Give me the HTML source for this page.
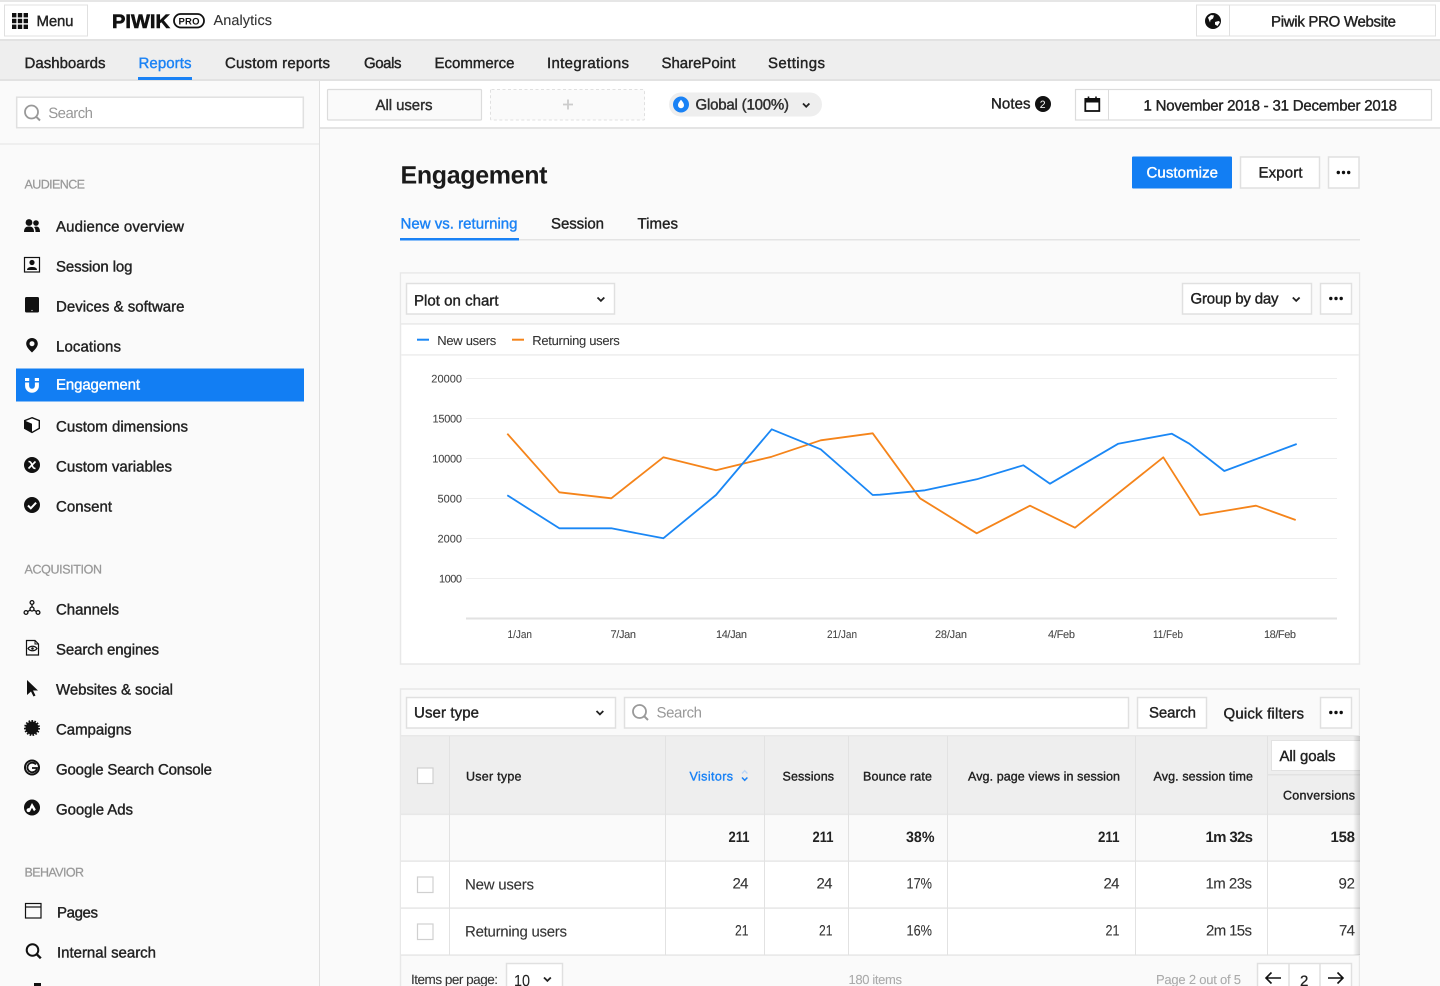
<!DOCTYPE html>
<html lang="en"><head><meta charset="utf-8"><title>Engagement - Piwik PRO Analytics</title>
<style>
html,body{margin:0;padding:0;width:1440px;height:986px;overflow:hidden;background:#fafafa}
svg{display:block}
text{font-family:"Liberation Sans",sans-serif;fill:#222;white-space:pre;text-rendering:geometricPrecision}
.m{font-size:15px;stroke:#222;stroke-width:.4}
.s{font-size:12.5px;fill:#999;stroke:#999;stroke-width:.25}
.ph{font-size:15px;fill:#999}
.r{font-size:15px;fill:#333;stroke:#333;stroke-width:.1}
.h{font-size:12.5px;stroke:#222;stroke-width:.38}
.c{font-size:11px;fill:#444;stroke:#444;stroke-width:.06}
.l{font-size:13px;fill:#333;stroke:#333;stroke-width:.08}
.n{font-size:15px;font-weight:700;fill:#222}
.w{fill:#fff;stroke:#fff}
.b{fill:#1a82f5;stroke:#1a82f5}
.box{fill:#fff;stroke:#e0e0e0;stroke-width:1.5}
.g{stroke:#eee;stroke-width:1}
.v{stroke:#e2e2e2;stroke-width:1}
.ch{fill:none;stroke:#222;stroke-width:1.8}
</style></head><body>
<svg width="1440" height="986" viewBox="0 0 1440 986" xmlns="http://www.w3.org/2000/svg">
<defs><linearGradient id="sh" x1="0" x2="1" y1="0" y2="0"><stop offset="0" stop-color="#000" stop-opacity="0"/><stop offset="1" stop-color="#000" stop-opacity=".16"/></linearGradient></defs>
<rect width="1440" height="986" fill="#fafafa"/>

<!-- top bar -->
<rect width="1440" height="2" fill="#e6e6e6"/>
<rect y="2" width="1440" height="37" fill="#fff"/>
<rect y="39" width="1440" height="2" fill="#e2e2e2"/>
<rect x="4.5" y="5" width="83" height="31" fill="#fff" stroke="#e0e0e0"/>
<g fill="#111">
<rect x="12" y="13" width="4.4" height="4.4"/><rect x="17.8" y="13" width="4.4" height="4.4"/><rect x="23.6" y="13" width="4.4" height="4.4"/>
<rect x="12" y="18.8" width="4.4" height="4.4"/><rect x="17.8" y="18.8" width="4.4" height="4.4"/><rect x="23.6" y="18.8" width="4.4" height="4.4"/>
<rect x="12" y="24.6" width="4.4" height="4.4"/><rect x="17.8" y="24.6" width="4.4" height="4.4"/><rect x="23.6" y="24.6" width="4.4" height="4.4"/>
</g>
<text class="m" x="36.5" y="26" textLength="37">Menu</text>
<text x="112" y="28" font-size="19.5" font-weight="700" textLength="58" lengthAdjust="spacingAndGlyphs" style="fill:#111;stroke:#111;stroke-width:.6">PIWIK</text>
<rect x="174" y="14" width="30" height="13.5" rx="6.7" fill="none" stroke="#111" stroke-width="1.8"/>
<text x="178.5" y="24.3" font-size="9.5" font-weight="700" textLength="21" style="fill:#111">PRO</text>
<text x="213.5" y="25" font-size="14.5" textLength="58.5" style="fill:#333;stroke:#333;stroke-width:.1">Analytics</text>
<rect x="1196.5" y="5" width="239" height="31" fill="#fff" stroke="#e0e0e0"/>
<line x1="1229.5" y1="5" x2="1229.5" y2="36" stroke="#e0e0e0"/>
<circle cx="1213" cy="21" r="8" fill="#111"/>
<path d="M1208 17.5l3-2.5 3 .5-1 3-2.5 1.5-.5 2.5zM1215 22l3.5-1 1.5 1-2.5 4-2.500-1.500z" fill="#fff"/>
<text class="m" x="1271" y="26.5" textLength="125">Piwik PRO Website</text>

<!-- nav -->
<rect y="41" width="1440" height="38" fill="#eeeeee"/>
<rect y="79" width="1440" height="2" fill="#e2e2e2"/>
<text class="m" x="24.5" y="68" textLength="81">Dashboards</text>
<text class="m b" x="138.5" y="68" textLength="53">Reports</text>
<text class="m" x="225" y="68" textLength="105">Custom reports</text>
<text class="m" x="364" y="68" textLength="37.5">Goals</text>
<text class="m" x="434.5" y="68" textLength="80">Ecommerce</text>
<text class="m" x="547" y="68" textLength="82">Integrations</text>
<text class="m" x="661.5" y="68" textLength="74">SharePoint</text>
<text class="m" x="768" y="68" textLength="57">Settings</text>
<rect x="138" y="77" width="54" height="3" fill="#1a82f5"/>

<!-- sidebar -->
<rect x="319" y="81" width="1" height="905" fill="#e0e0e0"/>
<rect y="143.500" width="319" height="1" fill="#e4e4e4"/>
<rect x="16.7" y="97.2" width="286.6" height="30.500" class="box"/>
<circle cx="31.5" cy="112" r="6.5" fill="none" stroke="#999" stroke-width="1.8"/><line x1="36.3" y1="116.8" x2="40" y2="120.5" stroke="#999" stroke-width="2"/>
<text class="ph" x="48.2" y="118" textLength="44.8">Search</text>
<text class="s" x="24.5" y="188.600" textLength="60.5">AUDIENCE</text>

<rect x="16" y="368.5" width="288" height="33" fill="#127ef3"/>
<text class="m" x="56" y="231.500" textLength="128">Audience overview</text>
<text class="m" x="56" y="271.500" textLength="76.5">Session log</text>
<text class="m" x="56" y="311.500" textLength="128.5">Devices &amp; software</text>
<text class="m" x="56" y="351.500" textLength="65">Locations</text>
<text class="m w" x="56" y="389.5" textLength="84">Engagement</text>
<text class="m" x="56" y="431.500" textLength="132">Custom dimensions</text>
<text class="m" x="56" y="471.500" textLength="116">Custom variables</text>
<text class="m" x="56" y="511.500" textLength="56">Consent</text>

<text class="s" x="24.5" y="573.600" textLength="77.5">ACQUISITION</text>
<text class="m" x="56" y="614.500" textLength="63">Channels</text>
<text class="m" x="56" y="654.500" textLength="103">Search engines</text>
<text class="m" x="56" y="694.500" textLength="117">Websites &amp; social</text>
<text class="m" x="56" y="734.500" textLength="75.5">Campaigns</text>
<text class="m" x="56" y="774.500" textLength="156">Google Search Console</text>
<text class="m" x="56" y="814.500" textLength="77">Google Ads</text>
<text class="s" x="24.5" y="876.600" textLength="59.5">BEHAVIOR</text>
<text class="m" x="57" y="917.500" textLength="41">Pages</text>
<text class="m" x="57" y="957.500" textLength="99">Internal search</text>

<!-- sidebar icons -->
<g fill="#111">
<circle cx="29" cy="222.500" r="3.400"/><path d="M24 232c0-4 1.800-5.500 5-5.500s5 1.500 5 5.500z"/>
<circle cx="36" cy="223" r="2.800"/><path d="M36 226.500c2.500 0 4 1.500 4 5.500h-4.500c0-2.500-.5-4-1.500-5z"/>
<rect x="24.500" y="257.500" width="15" height="14.500" fill="none" stroke="#111" stroke-width="1.200"/>
<circle cx="32" cy="262.500" r="2.600"/><path d="M27 270c0-2.500 2.500-3 5-3s5 .5 5 3z"/>
<rect x="25" y="297" width="14" height="15.500" rx="1.500"/><circle cx="32" cy="310.500" r=".6" fill="#fff"/>
<path fill-rule="evenodd" d="M32 338c3.400 0 5.800 2.500 5.800 5.700 0 3.200-3.500 6.500-5.800 8.800-2.300-2.300-5.800-5.600-5.800-8.800 0-3.200 2.400-5.700 5.800-5.700zm0 3.200a2.500 2.500 0 1 0 0 5 2.500 2.500 0 0 0 0-5z"/>
<path d="M32 417.700l7.300 2.900v7.700l-7.300 4.200-7.300-4.200v-7.700z" fill="#fff" stroke="#111" stroke-width="1.400"/>
<path d="M24.500 420.500l7.500 3.300v9l-7.500-4.200z"/>
<circle cx="32" cy="465" r="8"/><circle cx="32" cy="505" r="8"/>
<path d="M27 680v15l4-3.500 2.500 5 2-1-2.500-5h5z"/>
<circle cx="32" cy="728" r="6.500"/>
<circle cx="32" cy="728" r="7" fill="none" stroke="#111" stroke-width="2" stroke-dasharray="1.600 1.330"/>
<circle cx="32" cy="807.500" r="8"/>
<rect x="34" y="983" width="7" height="3"/>
</g>
<path d="M28.500 468.500l7-7M28.500 461.500c2 0 2.500 1 3.500 3.500s1.500 3.500 3.500 3.500" fill="none" stroke="#fff" stroke-width="1.600"/>
<path d="M28 505.500l2.800 2.800 5.300-5.600" fill="none" stroke="#fff" stroke-width="2"/>
<path d="M25 378h4.200v3H25zM34.800 378H39v3h-4.200z" fill="#fff"/>
<path d="M27.100 382.500v3.400a4.900 4.900 0 0 0 9.800 0v-3.400" fill="none" stroke="#fff" stroke-width="4"/>
<g fill="none" stroke="#111" stroke-width="1.300">
<circle cx="32" cy="602.500" r="1.900"/><circle cx="26" cy="612.500" r="1.900"/><circle cx="38" cy="612.500" r="1.900"/><circle cx="32" cy="609" r="2"/>
<path d="M32 604.500v2.500M30.200 610l-2.500 1.600M33.800 610l2.500 1.600"/>
<path d="M26.500 640.500h8.500l3.500 3.500v11h-12z" stroke-width="1.200"/><path d="M35 640.500v3.500h3.500" stroke-width="1"/>
<path d="M28 648.500c2.200-3 6.800-3 9 0-2.200 3-6.800 3-9 0z" stroke-width="1.200"/>
<circle cx="32" cy="767.500" r="7" stroke-width="2"/>
<path d="M36 764.500a4.800 4.800 0 1 0 1 3.500h-5" stroke-width="1.800"/>
<rect x="25.500" y="903.500" width="15.500" height="14.500" stroke-width="1.200"/><path d="M25.500 907h15.500" stroke-width="1.200"/>
<circle cx="32.500" cy="950" r="5.800" stroke-width="2"/><path d="M36.800 954.300l4 4" stroke-width="2.400"/>
</g>
<circle cx="32.500" cy="648.500" r="1.300" fill="#111"/>
<path d="M32 803l3.800 6.500-1.800 1.800-2-3.500-1.500 2.800a2 2 0 1 1-1.200-2.300z" fill="#fff"/>

<!-- filter bar -->
<rect x="320" y="81" width="1120" height="46" fill="#fff"/>
<rect x="320" y="127" width="1120" height="2" fill="#e4e4e4"/>
<rect x="327.500" y="89.500" width="154" height="30.500" rx="1" fill="#fafafa" stroke="#dcdcdc" stroke-width="1.200"/>
<text class="m" x="375.500" y="110" textLength="57" style="fill:#333">All users</text>
<rect x="490.500" y="89.500" width="154" height="30.500" rx="1" fill="#fafafa" stroke="#e0e0e0" stroke-dasharray="3 2.500"/>
<path d="M568 99.500v10M563 104.500h10" stroke="#ccc" stroke-width="1.800"/>
<rect x="669" y="92.500" width="153" height="24" rx="12" fill="#eee"/>
<circle cx="681" cy="104.500" r="8" fill="#1a82f5"/>
<path d="M681 99.800c1.500 1.800 3 3.500 3 5.400a3 3 0 0 1-6 0c0-1.900 1.500-3.600 3-5.400z" fill="#fff"/>
<text class="m" x="695.500" y="109.500" textLength="93.500" style="fill:#333">Global (100%)</text>
<path class="ch" d="M803 103.500l3.200 3.200 3.200-3.200"/>
<text class="m" x="991" y="108.500" textLength="39.500">Notes</text>
<circle cx="1043" cy="104" r="8" fill="#111"/>
<text x="1039.800" y="107.800" font-size="10.500" textLength="6.500" style="fill:#fff">2</text>
<rect x="1075.500" y="89.500" width="356" height="30.500" fill="#fff" stroke="#dcdcdc" stroke-width="1.200"/>
<line x1="1108.500" y1="89.500" x2="1108.500" y2="120" stroke="#dcdcdc"/>
<rect x="1085.300" y="99" width="14" height="12" fill="none" stroke="#111" stroke-width="1.800"/>
<rect x="1085" y="98" width="15" height="4.500" fill="#111"/>
<path d="M1088.500 96.500v2.500M1096 96.500v2.500" stroke="#111" stroke-width="1.600"/>
<text class="m" x="1143.500" y="110.500" textLength="253.500">1 November 2018 - 31 December 2018</text>

<!-- heading -->
<text x="400.500" y="183.500" font-size="25" font-weight="700" textLength="147" style="fill:#1a1a1a">Engagement</text>
<rect x="1132" y="156.500" width="100" height="32" rx="1" fill="#127ef3"/>
<text class="m w" x="1146.500" y="177.500" textLength="71.500">Customize</text>
<rect x="1240.500" y="157" width="79" height="31" class="box"/>
<text class="m" x="1258.500" y="177.500" textLength="44">Export</text>
<rect x="1328.500" y="157" width="30.500" height="31" class="box"/>
<g fill="#111"><circle cx="1338.300" cy="172.500" r="1.700"/><circle cx="1343.500" cy="172.500" r="1.700"/><circle cx="1348.700" cy="172.500" r="1.700"/></g>
<rect x="400" y="239" width="960" height="1.500" fill="#e4e4e4"/>
<rect x="400" y="238" width="119" height="2.500" fill="#1a82f5"/>
<text class="m b" x="400.500" y="228.700" textLength="117">New vs. returning</text>
<text class="m" x="551" y="228.700" textLength="53">Session</text>
<text class="m" x="637.500" y="228.700" textLength="40.500">Times</text>

<!-- chart panel -->
<rect x="400.500" y="273" width="959" height="391" fill="#fff" stroke="#e8e8e8" stroke-width="1.500"/>
<rect x="401.200" y="273.800" width="957.600" height="49.500" fill="#fafafa"/>
<rect x="401" y="323" width="958" height="1.800" fill="#ececec"/>
<rect x="401" y="354" width="958" height="1.800" fill="#f0f0f0"/>
<rect x="406.500" y="283.500" width="208" height="30.500" class="box"/>
<text class="m" x="414" y="305.300" textLength="84.500">Plot on chart</text>
<path class="ch" d="M597.500 297.500l3.400 3.400 3.400-3.400"/>
<rect x="1182.500" y="283.500" width="129" height="30.500" class="box"/>
<text class="m" x="1190.500" y="303.500" textLength="88">Group by day</text>
<path class="ch" d="M1292.800 297.500l3.400 3.400 3.400-3.400"/>
<rect x="1320.500" y="283.500" width="31" height="30.500" class="box"/>
<g fill="#111"><circle cx="1330.800" cy="298.500" r="1.700"/><circle cx="1336" cy="298.500" r="1.700"/><circle cx="1341.200" cy="298.500" r="1.700"/></g>
<rect x="417" y="338.700" width="12" height="2" fill="#1a87f5"/>
<text class="l" x="437.300" y="345" textLength="59">New users</text>
<rect x="512" y="338.700" width="12" height="2" fill="#f5841a"/>
<text class="l" x="532.300" y="345" textLength="87.500">Returning users</text>
<g>
<line class="g" x1="466" y1="378.500" x2="1337" y2="378.500"/>
<line class="g" x1="466" y1="418.500" x2="1337" y2="418.500"/>
<line class="g" x1="466" y1="458.500" x2="1337" y2="458.500"/>
<line class="g" x1="466" y1="498.500" x2="1337" y2="498.500"/>
<line class="g" x1="466" y1="538.500" x2="1337" y2="538.500"/>
<line class="g" x1="466" y1="578.500" x2="1337" y2="578.500"/>
</g>
<rect x="466" y="617.500" width="871" height="2" fill="#e2e2e2"/>
<text class="c" x="431.300" y="382.500" textLength="30.700">20000</text>
<text class="c" x="432.500" y="422.500" textLength="29.500">15000</text>
<text class="c" x="432.300" y="462.500" textLength="29.700">10000</text>
<text class="c" x="437.500" y="502.500" textLength="24.500">5000</text>
<text class="c" x="437.500" y="542.500" textLength="24.500">2000</text>
<text class="c" x="439" y="582.500" textLength="23">1000</text>
<text class="c" x="507.500" y="638" textLength="24.500" lengthAdjust="spacingAndGlyphs">1/Jan</text>
<text class="c" x="610.500" y="638" textLength="25.500">7/Jan</text>
<text class="c" x="716" y="638" textLength="31">14/Jan</text>
<text class="c" x="827" y="638" textLength="30" lengthAdjust="spacingAndGlyphs">21/Jan</text>
<text class="c" x="935" y="638" textLength="32">28/Jan</text>
<text class="c" x="1048" y="638" textLength="27">4/Feb</text>
<text class="c" x="1153" y="638" textLength="30" lengthAdjust="spacingAndGlyphs">11/Feb</text>
<text class="c" x="1264" y="638" textLength="32">18/Feb</text>
<polyline fill="none" stroke="#f5841a" stroke-width="1.800" stroke-linejoin="round" points="507.300,433.700 559.300,492.300 611.300,498.300 663.300,457.300 716,470.300 771.700,456.700 820.700,440.300 872.700,433.300 920,498.300 976.700,533.300 1030,505.700 1075,527.700 1163.300,457.300 1200,515 1256,505.700 1295.700,520"/>
<polyline fill="none" stroke="#1a87f5" stroke-width="1.800" stroke-linejoin="round" points="507.300,495.300 559.300,528.300 611.300,528.300 663.300,538.300 716,495 771.700,429.300 820.700,449.300 872.700,495 880,494.700 925,490.300 976.700,479.300 1023.300,465.300 1050,483.700 1118.300,443.700 1171.700,433.700 1189.300,443.700 1224.300,471 1296.700,444"/>

<!-- table panel -->
<rect x="400.500" y="689" width="959" height="310" fill="#fafafa" stroke="#e8e8e8" stroke-width="1.500"/>
<rect x="406.500" y="697.500" width="209" height="30.500" class="box"/>
<text class="m" x="414" y="717.700" textLength="65">User type</text>
<path class="ch" d="M596.500 711l3.400 3.400 3.400-3.400"/>
<rect x="624.500" y="697.500" width="504" height="30.500" class="box"/>
<circle cx="639.500" cy="711.500" r="6.500" fill="none" stroke="#999" stroke-width="1.800"/><line x1="644.300" y1="716.300" x2="648" y2="720" stroke="#999" stroke-width="2"/>
<text class="ph" x="656.500" y="717.700" textLength="45.500">Search</text>
<rect x="1137.500" y="697.500" width="69" height="30.500" class="box"/>
<text class="m" x="1149" y="717.700" textLength="47">Search</text>
<text class="m" x="1223.500" y="718.700" textLength="80.500">Quick filters</text>
<rect x="1320.500" y="697.500" width="31" height="30.500" class="box"/>
<g fill="#111"><circle cx="1330.800" cy="712.500" r="1.700"/><circle cx="1336" cy="712.500" r="1.700"/><circle cx="1341.200" cy="712.500" r="1.700"/></g>

<rect x="401" y="735.500" width="959" height="79" fill="#eeeeee"/>
<rect x="401" y="735" width="959" height="1.500" fill="#e8e8e8"/>
<rect x="401" y="815" width="959" height="46" fill="#fafafa"/>
<rect x="401" y="861.500" width="959" height="93" fill="#fff"/>
<rect x="401" y="813.500" width="959" height="1.600" fill="#e8e8e8"/>
<rect x="401" y="860.300" width="959" height="1.600" fill="#e8e8e8"/>
<rect x="401" y="907.300" width="959" height="1.600" fill="#e8e8e8"/>
<rect x="401" y="954.300" width="959" height="1.600" fill="#e8e8e8"/>
<line class="v" x1="449.500" y1="736" x2="449.500" y2="955"/>
<line class="v" x1="665.500" y1="736" x2="665.500" y2="955"/>
<line class="v" x1="764.500" y1="736" x2="764.500" y2="955"/>
<line class="v" x1="848.500" y1="736" x2="848.500" y2="955"/>
<line class="v" x1="947.500" y1="736" x2="947.500" y2="955"/>
<line class="v" x1="1135.500" y1="736" x2="1135.500" y2="955"/>
<line class="v" x1="1267.500" y1="736" x2="1267.500" y2="955"/>
<rect x="417.500" y="768" width="15.500" height="15.500" fill="#fff" stroke="#d0d0d0" stroke-width="1.200"/>
<rect x="417.500" y="877" width="15.500" height="15.500" fill="#fff" stroke="#d0d0d0" stroke-width="1.200"/>
<rect x="417.500" y="924" width="15.500" height="15.500" fill="#fff" stroke="#d0d0d0" stroke-width="1.200"/>

<text class="h" x="466" y="780.700" textLength="55.500">User type</text>
<text class="h b" x="689.500" y="780.700" textLength="43.500">Visitors</text>
<path d="M742 773.500l2.700-2.800 2.700 2.800" fill="none" stroke="#b9d6f8" stroke-width="1.300"/>
<path d="M742 777.500l2.700 2.800 2.700-2.800" fill="none" stroke="#1a82f5" stroke-width="1.500"/>
<text class="h" x="782.500" y="780.700" textLength="51.500">Sessions</text>
<text class="h" x="863" y="780.700" textLength="69">Bounce rate</text>
<text class="h" x="968" y="780.700" textLength="152">Avg. page views in session</text>
<text class="h" x="1153.500" y="780.700" textLength="99.500">Avg. session time</text>
<rect x="1271.500" y="740.500" width="92" height="30" fill="#fff" stroke="#e2e2e2"/>
<text class="m" x="1279.500" y="761" textLength="56">All goals</text>
<rect x="1268" y="774" width="92" height="1.500" fill="#e2e2e2"/>
<text class="h" x="1283" y="799.700" textLength="72">Conversions</text>

<text class="n" x="728.500" y="842" textLength="21" lengthAdjust="spacingAndGlyphs">211</text>
<text class="n" x="812.500" y="842" textLength="21" lengthAdjust="spacingAndGlyphs">211</text>
<text class="n" x="906" y="842" textLength="28.500" lengthAdjust="spacingAndGlyphs">38%</text>
<text class="n" x="1098" y="842" textLength="21.500" lengthAdjust="spacingAndGlyphs">211</text>
<text class="n" x="1205.500" y="842" textLength="47.500">1m 32s</text>
<text class="n" x="1330.500" y="842" textLength="24.500">158</text>

<text class="r" x="465" y="889.300" textLength="69">New users</text>
<text class="r" x="732.500" y="888.500" textLength="16">24</text>
<text class="r" x="816.500" y="888.500" textLength="16">24</text>
<text class="r" x="906.500" y="888.500" textLength="25.500" lengthAdjust="spacingAndGlyphs">17%</text>
<text class="r" x="1103.500" y="888.500" textLength="16">24</text>
<text class="r" x="1205.500" y="888.500" textLength="46.500">1m 23s</text>
<text class="r" x="1338.500" y="888.500" textLength="16.500">92</text>
<text class="r" x="465" y="936.300" textLength="102">Returning users</text>
<text class="r" x="735" y="935.500" textLength="13.500" lengthAdjust="spacingAndGlyphs">21</text>
<text class="r" x="819" y="935.500" textLength="13.500" lengthAdjust="spacingAndGlyphs">21</text>
<text class="r" x="906.500" y="935.500" textLength="25.500" lengthAdjust="spacingAndGlyphs">16%</text>
<text class="r" x="1105.500" y="935.500" textLength="14" lengthAdjust="spacingAndGlyphs">21</text>
<text class="r" x="1206" y="935.500" textLength="46">2m 15s</text>
<text class="r" x="1339" y="935.500" textLength="16">74</text>
<rect x="1353" y="736" width="7" height="219" fill="url(#sh)"/>
<rect x="1360" y="670" width="80" height="316" fill="#fafafa"/>

<!-- footer -->
<text class="l" x="411" y="984" textLength="87" style="font-size:13.500px">Items per page:</text>
<rect x="506.500" y="963.500" width="56" height="30" class="box"/>
<text class="r" x="514" y="986" textLength="16" lengthAdjust="spacingAndGlyphs" style="fill:#222;font-size:16px">10</text>
<path class="ch" d="M544 977.500l3.400 3.400 3.400-3.400"/>
<text class="l" x="848.500" y="984" textLength="53.500" style="fill:#aaa;stroke:#aaa">180 items</text>
<text class="l" x="1156" y="984" textLength="85" style="fill:#aaa;stroke:#aaa">Page 2 out of 5</text>
<rect x="1257.500" y="963.500" width="94" height="30" class="box"/>
<line x1="1289" y1="963" x2="1289" y2="986" stroke="#e0e0e0" stroke-width="1.500"/>
<line x1="1320" y1="963" x2="1320" y2="986" stroke="#e0e0e0" stroke-width="1.500"/>
<path d="M1281 978h-15M1271.500 972.500l-5.500 5.500 5.500 5.500" fill="none" stroke="#111" stroke-width="1.600"/>
<text x="1300" y="986" font-size="15" textLength="9" style="stroke:#222;stroke-width:.3">2</text>
<path d="M1328 978h15M1337.500 972.500l5.500 5.500-5.500 5.500" fill="none" stroke="#111" stroke-width="1.600"/>
</svg>
</body></html>
